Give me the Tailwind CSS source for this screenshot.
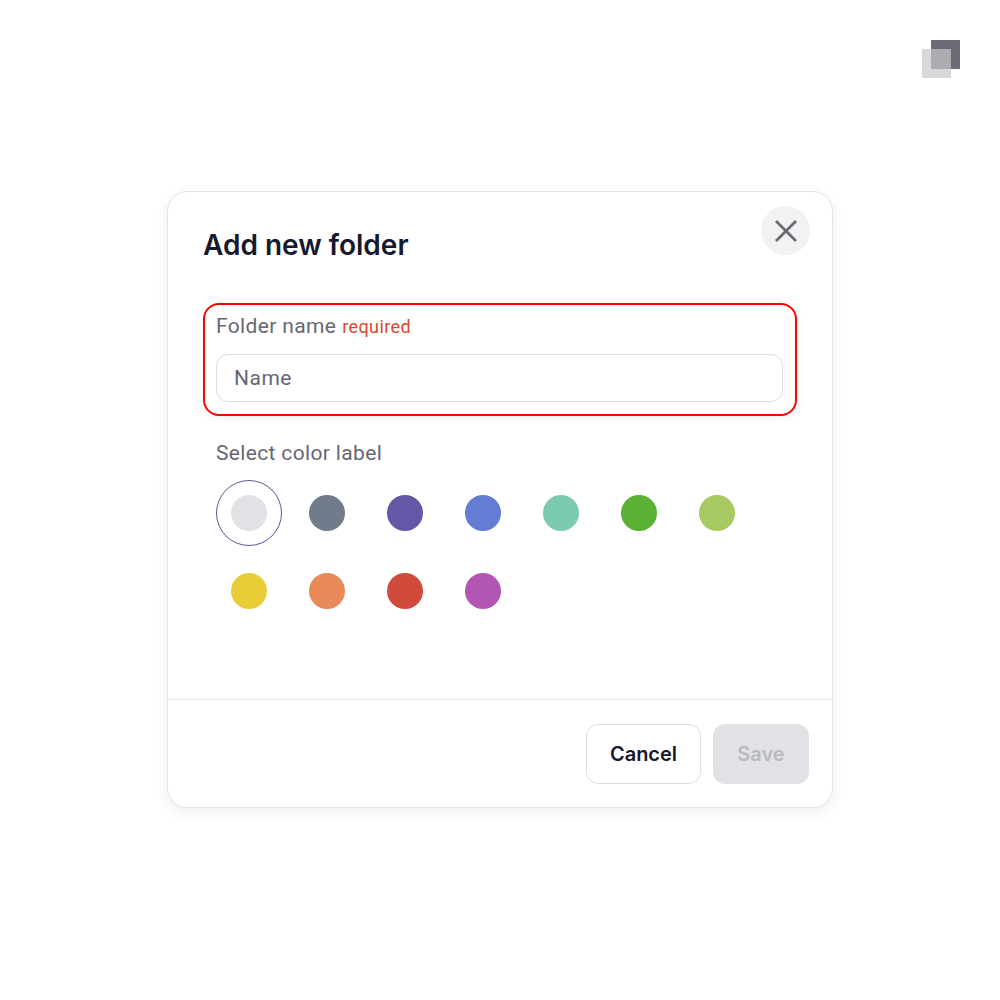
<!DOCTYPE html>
<html lang="en">
<head>
  <meta charset="UTF-8">
  <title>Add new folder</title>
  <script src="https://cdn.jsdelivr.net/npm/@tailwindcss/browser@4"></script>
</head>
<body class="bg-white min-h-screen font-['Roboto',sans-serif]">
  <!-- logo -->
  <div class="absolute top-[40px] left-[922px] w-[38px] h-[38px]">
    <div class="absolute top-0 left-[9px] w-[29px] h-[29px] bg-[#6b6b75]"></div>
    <div class="absolute top-[9px] left-0 w-[29px] h-[29px] bg-[#c8c8ca]/70"></div>
  </div>

  <div class="h-screen flex items-start justify-center pt-[191px]">
    <div class="relative w-[666px] h-[617px] bg-white border border-[#e3e4e8] rounded-[20px] shadow-[0_4px_14px_rgba(20,20,40,0.07)] flex flex-col">
      <button class="absolute top-[14px] right-[22px] w-[49px] h-[49px] rounded-full bg-[#f2f2f3] flex items-center justify-center">
        <svg width="24" height="24" viewBox="0 0 24 24" fill="none" stroke="#6b6b75" stroke-width="2.8" stroke-linecap="square">
          <path d="M3 3L21 21M21 3L3 21"/>
        </svg>
      </button>

      <div class="flex-1 pl-[35px] pr-[35px] pt-[33px]">
        <h1 class="font-['Inter',sans-serif] text-[28px] leading-[40px] font-semibold text-[#16182b]">Add new folder</h1>

        <div class="mt-[38px] w-[594px] h-[113px] border-2 border-[#ff0000] rounded-[16px] pl-[11px] pr-[12px] pt-[6px] shadow-[0_2px_10px_rgba(20,20,40,0.06)]">
          <div class="flex items-baseline gap-[6px] h-[30px] leading-[30px]">
            <span class="text-[21px] tracking-[0.35px] text-[#666773]">Folder name</span>
            <span class="text-[18px] tracking-[0.4px] text-[#d9482f]">required</span>
          </div>
          <input type="text" placeholder="Name" class="mt-[13px] w-full h-[48px] px-[17px] border border-[#dcdde1] rounded-[12px] text-[21px] tracking-[0.5px] text-[#666773] placeholder:text-[#666773] outline-none bg-white">
        </div>

        <div class="pl-[13px] mt-[22px]">
          <div class="text-[21px] leading-[30px] tracking-[0.35px] text-[#666773]">Select color label</div>
          <div class="mt-[12px] grid grid-cols-[repeat(7,66px)] gap-[12px]">
            <div class="w-[66px] h-[66px] rounded-full border border-[#5d52a0] flex items-center justify-center"><span class="w-[36px] h-[36px] rounded-full bg-[#e1e2e6]"></span></div>
            <div class="w-[66px] h-[66px] flex items-center justify-center"><span class="w-[36px] h-[36px] rounded-full bg-[#727b8a]"></span></div>
            <div class="w-[66px] h-[66px] flex items-center justify-center"><span class="w-[36px] h-[36px] rounded-full bg-[#6358a5]"></span></div>
            <div class="w-[66px] h-[66px] flex items-center justify-center"><span class="w-[36px] h-[36px] rounded-full bg-[#627dd3]"></span></div>
            <div class="w-[66px] h-[66px] flex items-center justify-center"><span class="w-[36px] h-[36px] rounded-full bg-[#7bcbb0]"></span></div>
            <div class="w-[66px] h-[66px] flex items-center justify-center"><span class="w-[36px] h-[36px] rounded-full bg-[#5ab133]"></span></div>
            <div class="w-[66px] h-[66px] flex items-center justify-center"><span class="w-[36px] h-[36px] rounded-full bg-[#a8ca62]"></span></div>
            <div class="w-[66px] h-[66px] flex items-center justify-center"><span class="w-[36px] h-[36px] rounded-full bg-[#e9cd37]"></span></div>
            <div class="w-[66px] h-[66px] flex items-center justify-center"><span class="w-[36px] h-[36px] rounded-full bg-[#e88a58]"></span></div>
            <div class="w-[66px] h-[66px] flex items-center justify-center"><span class="w-[36px] h-[36px] rounded-full bg-[#d14b3c]"></span></div>
            <div class="w-[66px] h-[66px] flex items-center justify-center"><span class="w-[36px] h-[36px] rounded-full bg-[#b355b3]"></span></div>
          </div>
        </div>
      </div>

      <div class="h-[108px] border-t border-[#e3e4e8] flex justify-end items-start gap-[12px] pt-[24px] pr-[23px]">
        <button class="font-['Inter',sans-serif] w-[115px] h-[60px] rounded-[12px] border border-[#dcdde1] bg-white text-[20px] font-semibold text-[#16182b]">Cancel</button>
        <button class="font-['Inter',sans-serif] w-[96px] h-[60px] rounded-[12px] bg-[#e1e2e6] text-[20px] font-semibold text-[#b9bac0]">Save</button>
      </div>
    </div>
  </div>
</body>
</html>
